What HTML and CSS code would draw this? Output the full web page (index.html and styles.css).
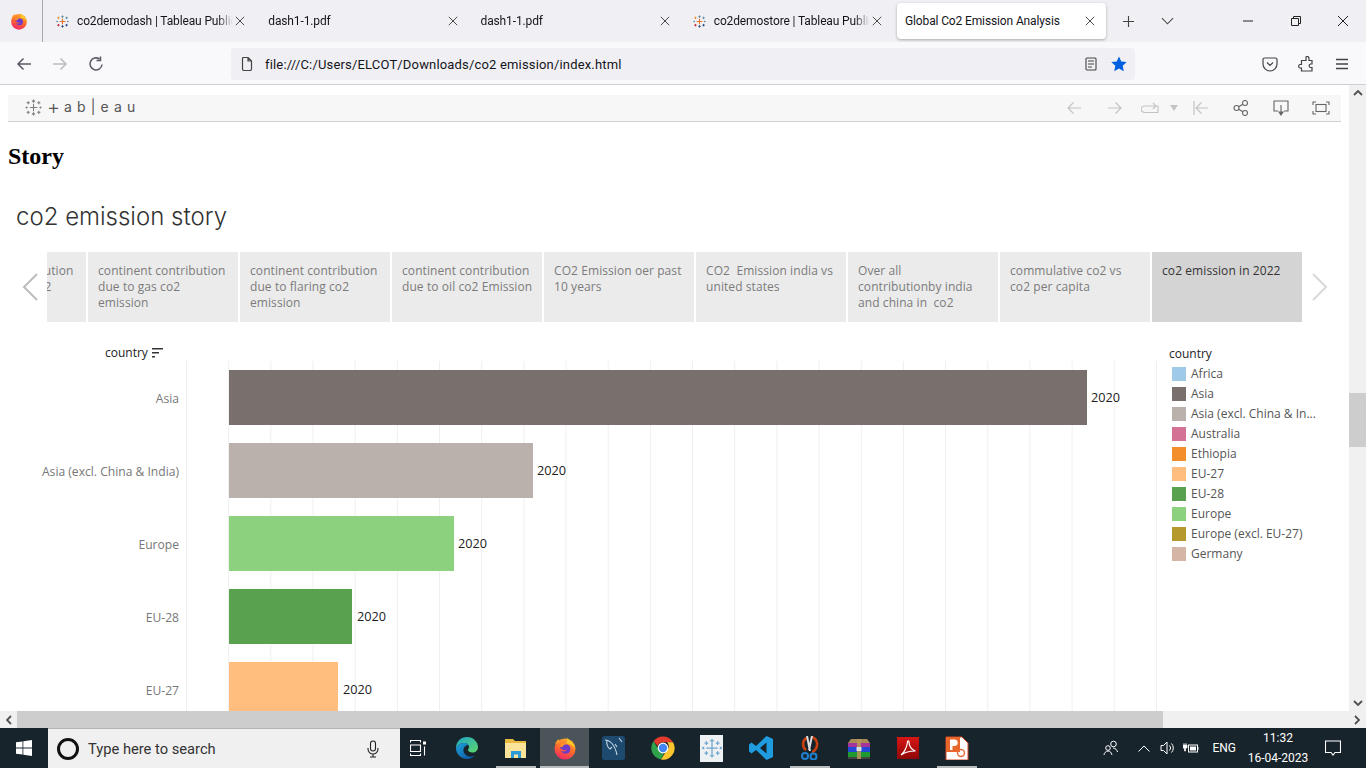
FILE: index.html
```html
<!DOCTYPE html>
<html lang="en">
<head>
<meta charset="utf-8">
<title>Global Co2 Emission Analysis</title>
<link rel="stylesheet" href="styles.css">
</head>
<body>
<svg class="defs" width="0" height="0" aria-hidden="true">
  <defs>
    <linearGradient id="ffg" x1="0.7" y1="0" x2="0.3" y2="1"><stop offset="0" stop-color="#ffb02e"/><stop offset="0.5" stop-color="#ff6a2a"/><stop offset="1" stop-color="#f0256b"/></linearGradient>
    <linearGradient id="edg" x1="0" y1="0" x2="1" y2="1"><stop offset="0" stop-color="#1fa3dc"/><stop offset="1" stop-color="#0c4f9c"/></linearGradient>
    <linearGradient id="edt" x1="0" y1="0" x2="1" y2="1"><stop offset="0" stop-color="#1fa6c8"/><stop offset="1" stop-color="#5fd56a"/></linearGradient>
    <linearGradient id="acg" x1="0" y1="0" x2="0" y2="1"><stop offset="0" stop-color="#d81616"/><stop offset="1" stop-color="#8f0606"/></linearGradient>
    <symbol id="firefox" viewBox="0 0 24 24">
      <circle cx="12" cy="13" r="10.500" fill="url(#ffg)"/>
      <path d="M13 .5c1 3 8 4.500 9.500 12.500-2-3-5-5.500-9-5.500 1.500-2 1-5-.5-7z" fill="#ffc928"/>
      <path d="M2 8c1-2 2-4 4-5 0 1.500.5 2.500 1.500 3z" fill="#ff9a2a"/>
      <path d="M7 12c1-3.500 6-5 9-2.500 2 2 2 5.500-.5 7.500-3 1.800-7 0-7.500-2.500 2 1.500 5 1 6-.5-1.500.5-4 .5-7-2z" fill="#6f3bc8"/>
      <path d="M7 10c2-3 6-3.500 8-2-3 0-5 1-6 3.500z" fill="#ff9a2a"/>
    </symbol>
    <symbol id="tabcolor" viewBox="0 0 16 16">
      <path d="M8 4.500v7M4.500 8h7" stroke="#e8762b" stroke-width="1.400"/>
      <path d="M8 .5v3M6.500 2h3" stroke="#5b879b" stroke-width="1.100"/>
      <path d="M8 12.500v3M6.500 14h3" stroke="#1f447a" stroke-width="1.100"/>
      <path d="M3 2v3M1.500 3.500h3" stroke="#eb9129" stroke-width="1.100"/>
      <path d="M13 2v3M11.500 3.500h3" stroke="#59879b" stroke-width="1.100"/>
      <path d="M3 11v3M1.500 12.500h3" stroke="#c72035" stroke-width="1.100"/>
      <path d="M13 11v3M11.500 12.500h3" stroke="#1f447a" stroke-width="1.100"/>
      <path d="M1.500 7v2M.5 8h2M14.500 7v2M13.500 8h2" stroke="#5b879b" stroke-width="1"/>
    </symbol>
    <symbol id="tabgrey" viewBox="0 0 16 16">
      <g stroke="#7d7d7d" stroke-width="1" fill="none">
        <path d="M8 4.500v7M4.500 8h7M8 .5v3M6.500 2h3M8 12.500v3M6.500 14h3M3 2v3M1.500 3.500h3M13 2v3M11.500 3.500h3M3 11v3M1.500 12.500h3M13 11v3M11.500 12.500h3M1.500 7v2M.5 8h2M14.500 7v2M13.500 8h2"/>
      </g>
    </symbol>
    <symbol id="tabtile" viewBox="0 0 16 16">
      <g stroke="#6fa6cc" stroke-width="1" fill="none">
        <path d="M8 3.500v9M3.500 8h9M8 .5v3M6.500 2h3M8 12.500v3M6.500 14h3M3.500 2.500v3M2 4h3M12.500 2.500v3M11 4h3M3.500 10.500v3M2 12h3M12.500 10.500v3M11 12h3M1 7v2M0 8h2M15 7v2M14 8h2"/>
      </g>
    </symbol>
    <symbol id="x" viewBox="0 0 12 12"><path d="M1 1l10 10M11 1L1 11" stroke="#3a3a3a" stroke-width="1.100" fill="none"/></symbol>
  </defs>
</svg>

<header class="tabstrip">
  <div class="ff-button"><svg class="ic18" viewBox="0 0 24 24"><use href="#firefox"/></svg></div>
  <div class="tabs">
    <div class="tab"><svg class="ic13 fav"><use href="#tabcolor"/></svg><span class="tab-title">co2demodash | Tableau Public</span><svg class="tab-x"><use href="#x"/></svg></div>
    <div class="tab"><span class="tab-title">dash1-1.pdf</span><svg class="tab-x"><use href="#x"/></svg></div>
    <div class="tab"><span class="tab-title">dash1-1.pdf</span><svg class="tab-x"><use href="#x"/></svg></div>
    <div class="tab"><svg class="ic13 fav"><use href="#tabcolor"/></svg><span class="tab-title">co2demostore | Tableau Public</span><svg class="tab-x"><use href="#x"/></svg></div>
    <div class="tab tab-active"><span class="tab-title">Global Co2 Emission Analysis</span><svg class="tab-x"><use href="#x"/></svg></div>
  </div>
  <svg class="strip-plus" viewBox="0 0 14 14"><path d="M7 1v12M1 7h12" stroke="#444" stroke-width="1.200"/></svg>
  <svg class="strip-chev" viewBox="0 0 14 8"><path d="M1 1l6 6 6-6" stroke="#444" stroke-width="1.100" fill="none"/></svg>
  <div class="win-ctrls">
    <svg class="win-ic" viewBox="0 0 12 12"><path d="M1 6h10" stroke="#222"/></svg>
    <svg class="win-ic" viewBox="0 0 12 12"><path d="M1.500 3.500h7v7h-7zM3.500 3.500v-2h7v7h-2" stroke="#222" fill="none"/></svg>
    <svg class="win-ic" viewBox="0 0 12 12"><path d="M1 1l10 10M11 1L1 11" stroke="#222" fill="none"/></svg>
  </div>
</header>

<nav class="navbar">
  <div class="nav-btns">
    <svg class="ic16" viewBox="0 0 16 16"><path d="M15 8H2M7.500 2.500L2 8l5.500 5.500" stroke="#5b5b66" stroke-width="1.500" fill="none"/></svg>
    <svg class="ic16" viewBox="0 0 16 16"><path d="M1 8h13M8.500 2.500L14 8l-5.500 5.500" stroke="#bcbcc0" stroke-width="1.500" fill="none"/></svg>
    <svg class="ic16" viewBox="0 0 16 16"><path d="M14 8.500A6 6 0 1 1 11.500 3M12.500 .5V4.500H8.500" stroke="#5b5b66" stroke-width="1.500" fill="none"/></svg>
  </div>
  <div class="urlbar">
    <svg class="url-doc" viewBox="0 0 12 14"><path d="M1.500 1.500a1 1 0 0 1 1-1h4.500l3.500 3.500v8a1.500 1.500 0 0 1-1.500 1.500h-6a1.500 1.500 0 0 1-1.500-1.500zM7 .5V4h3.500" stroke="#444" stroke-width="1.200" fill="none"/></svg>
    <span class="url-text">file:///C:/Users/ELCOT/Downloads/co2 emission/index.html</span>
    <svg class="url-reader" viewBox="0 0 12 14"><path d="M1 2a1 1 0 0 1 1-1h8a1 1 0 0 1 1 1v10a1 1 0 0 1-1 1H2a1 1 0 0 1-1-1zM3 4h6M3 7h6M3 10h4" stroke="#444" stroke-width="1.100" fill="none"/></svg>
    <svg class="url-star" viewBox="0 0 16 16"><path d="M8 .5l2.300 5 5.400.6-4 3.700 1.100 5.400L8 12.500l-4.800 2.700 1.100-5.400-4-3.700 5.400-.6z" fill="#0061e0"/></svg>
  </div>
  <div class="nav-right">
    <svg class="ic16" viewBox="0 0 16 16"><path d="M2.500 2h11A1.500 1.500 0 0 1 15 3.500V8a7 7 0 0 1-14 0V3.500A1.500 1.500 0 0 1 2.500 2zM5 6.500L8 9.500l3-3" stroke="#444" stroke-width="1.200" fill="none"/></svg>
    <svg class="ic16" viewBox="0 0 16 16"><path d="M8 1a1.800 1.800 0 0 1 3 1.200V4.500h3V8h-1.500a1.800 1.800 0 0 0 0 3.500H14V15H3.500v-3H2a1.800 1.800 0 0 1 0-3.500h1.500V4.500H8z" stroke="#444" stroke-width="1.200" fill="none"/></svg>
    <svg class="ic16" viewBox="0 0 16 16"><path d="M2 3.500h12M2 8h12M2 12.500h12" stroke="#444" stroke-width="1.300"/></svg>
  </div>
</nav>

<div class="browser-body">
  <main class="page">
    <div class="tb-toolbar">
      <div class="tb-logo"><svg class="tb-mark"><use href="#tabgrey"/></svg><span class="tb-plus">+</span><span class="tb-word">a b | e a u</span></div>
      <div class="tb-actions">
        <svg class="tb-ic tb-back" viewBox="0 0 16 14"><path d="M15 7H2M7.500 1.500L2 7l5.500 5.500" stroke="#c4c4c4" stroke-width="1.200" fill="none"/></svg>
        <svg class="tb-ic tb-fwd" viewBox="0 0 16 14"><path d="M1 7h13M8.500 1.500L14 7l-5.500 5.500" stroke="#c4c4c4" stroke-width="1.200" fill="none"/></svg>
        <svg class="tb-redo" viewBox="0 0 18 12"><path d="M9 4H3.500a3 3 0 0 0 0 6.500H17V4h-2M8.500 4h6M12 1l3 3-3 3" stroke="#c4c4c4" stroke-width="1.200" fill="none"/></svg>
        <svg class="tb-caret" viewBox="0 0 8 6"><path d="M0 0h8L4 6z" fill="#c4c4c4"/></svg>
        <svg class="tb-ic tb-first" viewBox="0 0 16 16"><path d="M1 1v14M15 8H3M8.500 2.500L3 8l5.500 5.500" stroke="#c4c4c4" stroke-width="1.200" fill="none"/></svg>
        <svg class="tb-ic tb-share" viewBox="0 0 16 16"><circle cx="3.500" cy="8" r="2.500" fill="none" stroke="#666" stroke-width="1.100"/><circle cx="12" cy="3" r="2.500" fill="none" stroke="#666" stroke-width="1.100"/><circle cx="12" cy="13" r="2.500" fill="none" stroke="#666" stroke-width="1.100"/><path d="M5.700 6.800L9.800 4.200M5.700 9.200l4.100 2.600" stroke="#666" stroke-width="1.100"/></svg>
        <svg class="tb-ic tb-dl" viewBox="0 0 16 16"><path d="M5 11H1V1h14v10h-4M8 5v9" stroke="#666" stroke-width="1.100" fill="none"/><path d="M5 11.500h6L8 16z" fill="#666"/></svg>
        <svg class="tb-full" viewBox="0 0 18 14"><path d="M1 4V1h3M14 1h3v3M17 10v3h-3M4 13H1v-3" stroke="#666" stroke-width="1.100" fill="none"/><rect x="4" y="3.500" width="10" height="7" fill="none" stroke="#666" stroke-width="1.100"/></svg>
      </div>
    </div>

    <h1 class="story-h">Story</h1>
    <h2 class="story-title">co2 emission story</h2>

    <div class="points">
      <svg class="pt-arrow" viewBox="0 0 16 28"><path d="M15 1L2 14l13 13" stroke="#bdbdbd" stroke-width="2" fill="none"/></svg>
      <div class="pt pt-clipped"><div class="pt-inner">continent contribution due to cement co2 emission</div></div>
      <div class="pt">continent contribution due to gas co2 emission</div>
      <div class="pt">continent contribution due to flaring co2 emission</div>
      <div class="pt">continent contribution due to oil co2 Emission</div>
      <div class="pt">CO2 Emission oer past 10 years</div>
      <div class="pt">CO2&nbsp; Emission india vs united states</div>
      <div class="pt">Over all<br>contributionby india and china in&nbsp; co2</div>
      <div class="pt">commulative co2 vs co2 per capita</div>
      <div class="pt pt-active">co2 emission in 2022</div>
      <svg class="pt-arrow pt-arrow-r" viewBox="0 0 16 28"><path d="M1 1l13 13L1 27" stroke="#d8d8d8" stroke-width="2" fill="none"/></svg>
    </div>

    <div class="viz">
      <div class="viz-main">
        <div class="col-head">country<svg class="sort-ic" viewBox="0 0 11 10"><path d="M0 0h11v1.500H0zM0 4h7v1.500H0zM0 8h3v1.500H0z" fill="#333"/></svg></div>
        <div class="viz-body">
          <div class="axis">
            <div class="axis-l">Asia</div>
            <div class="axis-l">Asia (excl. China &amp; India)</div>
            <div class="axis-l">Europe</div>
            <div class="axis-l">EU-28</div>
            <div class="axis-l">EU-27</div>
          </div>
          <div class="plot">
            <div class="row"><div class="bar c-asia" style="width:858px"></div><span class="val">2020</span></div>
            <div class="row"><div class="bar c-asiax" style="width:304px"></div><span class="val">2020</span></div>
            <div class="row"><div class="bar c-europe" style="width:225px"></div><span class="val">2020</span></div>
            <div class="row"><div class="bar c-eu28" style="width:123px"></div><span class="val val-far">2020</span></div>
            <div class="row"><div class="bar c-eu27" style="width:109px"></div><span class="val val-far">2020</span></div>
          </div>
        </div>
      </div>
      <aside class="legend">
        <div class="legend-t">country</div>
        <div class="lg"><i class="sw c-africa"></i>Africa</div>
        <div class="lg"><i class="sw c-asia"></i>Asia</div>
        <div class="lg"><i class="sw c-asiax"></i>Asia (excl. China &amp; In...</div>
        <div class="lg"><i class="sw c-aus"></i>Australia</div>
        <div class="lg"><i class="sw c-eth"></i>Ethiopia</div>
        <div class="lg"><i class="sw c-eu27"></i>EU-27</div>
        <div class="lg"><i class="sw c-eu28"></i>EU-28</div>
        <div class="lg"><i class="sw c-europe"></i>Europe</div>
        <div class="lg"><i class="sw c-europex"></i>Europe (excl. EU-27)</div>
        <div class="lg"><i class="sw c-ger"></i>Germany</div>
      </aside>
    </div>
  </main>
  <div class="vscroll">
    <svg class="sb-arrow" viewBox="0 0 10 6"><path d="M1 5l4-4 4 4" stroke="#505050" stroke-width="1.800" fill="none"/></svg>
    <div class="vthumb"></div>
    <svg class="sb-arrow" viewBox="0 0 10 6"><path d="M1 1l4 4 4-4" stroke="#505050" stroke-width="1.800" fill="none"/></svg>
  </div>
</div>

<div class="hscroll">
  <svg class="sb-arrow-h" viewBox="0 0 6 10"><path d="M5 1L1 5l4 4" stroke="#505050" stroke-width="1.800" fill="none"/></svg>
  <div class="hthumb"></div>
  <svg class="sb-arrow-h" viewBox="0 0 6 10"><path d="M1 1l4 4-4 4" stroke="#505050" stroke-width="1.800" fill="none"/></svg>
</div>

<footer class="taskbar">
  <div class="start"><svg class="ic16" viewBox="0 0 16 16"><path d="M0 2.300l6.500-.9v6.200H0zM7.300 1.300L16 0v7.600H7.300zM0 8.400h6.500v6.200L0 13.700zM7.300 8.400H16V16l-8.700-1.200z" fill="#fff"/></svg></div>
  <div class="search">
    <span class="cortana"></span>
    <span class="search-text">Type here to search</span>
    <svg class="mic" viewBox="0 0 12 18"><rect x="3.500" y="1" width="5" height="10" rx="2.500" fill="none" stroke="#222" stroke-width="1.100"/><path d="M1 8v1a5 5 0 0 0 10 0V8M6 14v3M3 17h6" stroke="#222" stroke-width="1.100" fill="none"/></svg>
  </div>
  <div class="apps">
    <div class="app"><svg class="ic16" viewBox="0 0 16 16"><path d="M0 .5h11M0 15.500h11M.5 .5v2M10.500 .5v2M.5 15.500v-2M10.500 15.500v-2M.5 5h10v6.500H.5zM14.500 6.500V15.500" stroke="#fff" stroke-width="1.100" fill="none"/><rect x="13" y="1.500" width="3" height="3" fill="#fff"/></svg></div>
    <div class="app"><svg class="ic24" viewBox="0 0 24 24"><path d="M1 12C1 5.500 6 1 12 1c6.500 0 11 5 11 10 0 3.500-2.500 5.500-5.500 5.500-2.500 0-4.500-1-4.500-2.500 0-1 1-1.500 1-3C14 8.500 11.500 7 9 7c-3.500 0-6.500 2-8 5z" fill="url(#edt)"/><path d="M1 12c0 6 5 11 11 11 3 0 5.500-1 7.500-3-5 1.500-10.500-.5-11-5-.3-3.500 2-6 5-6-1-1.500-2.500-2-4.500-2-3.500 0-6.500 2-8 5z" fill="url(#edg)"/></svg></div>
    <div class="app app-run"><svg class="ic24" viewBox="0 0 24 24"><path d="M1 3h8l2 2h11v17H1z" fill="#e8b93f"/><path d="M1 7h21v15H1z" fill="#fbe39a"/><path d="M7 22v-7h10v7h-3v-3.500h-4V22z" fill="#2a9bd8"/></svg></div>
    <div class="app app-on"><svg class="ic24"><use href="#firefox"/></svg></div>
    <div class="app"><svg class="ic24" viewBox="0 0 24 24"><rect x="0" y="0" width="23" height="24" rx="2.500" fill="#1d4a6e"/><path d="M3 4c5 0 10 5 12 15M5 4c-1 4 1 8 3 9l2-2M13 8l2 3M17 2l3 4" stroke="#c3d6e2" stroke-width="1.100" fill="none"/></svg></div>
    <div class="app"><svg class="ic24" viewBox="0 0 24 24"><path d="M12 .5a11.500 11.500 0 0 1 10 5.800H12A5.700 5.700 0 0 0 6.700 10L2.500 5.300A11.500 11.500 0 0 1 12 .5z" fill="#e33b2e"/><path d="M2.500 5.300L7 12.500a5.700 5.700 0 0 0 6 5.100L10 23.400A11.500 11.500 0 0 1 2.500 5.300z" fill="#2fa14a"/><path d="M22 6.300A11.500 11.500 0 0 1 10 23.400l5-8a5.700 5.700 0 0 0 1-9.100z" fill="#fbc52d"/><circle cx="12" cy="12" r="4.800" fill="#4285f4" stroke="#fff" stroke-width="1.200"/></svg></div>
    <div class="app"><span class="tile"><svg class="ic20"><use href="#tabtile"/></svg></span></div>
    <div class="app"><svg class="ic24" viewBox="0 0 24 24"><path d="M17.500 0L24 3v18l-6.500 3L7 14l-4.500 3.500L0 15.500V8.500L2.500 6.500 7 10zM17.500 6.500L11 12l6.500 5.500z" fill="#1f9be0" fill-rule="evenodd"/></svg></div>
    <div class="app app-run"><svg class="ic24" viewBox="0 0 24 24"><path d="M9 2C4 4 4 11 8 14M13 1c6 1 8 8 4 13-1 1-2 2-3 2" stroke="#c8400f" stroke-width="2.600" fill="none"/><path d="M14 0l-3 14M9 0l3 15" stroke="#ddd" stroke-width="2"/><circle cx="7" cy="20" r="3" fill="none" stroke="#1f80d0" stroke-width="2"/><circle cx="15.500" cy="20.500" r="3" fill="none" stroke="#1f80d0" stroke-width="2"/></svg></div>
    <div class="app"><svg class="ic24" viewBox="0 0 24 24"><path d="M1 7h22v4H1z" fill="#a5359c"/><path d="M1 11h22v5H1z" fill="#2249d8"/><path d="M1 16h22v5H1z" fill="#1e9a2e"/><path d="M1 21h22v2H1z" fill="#444"/><path d="M4 3h16l3 4H1z" fill="#a98b55"/><path d="M10 3h4v20h-4z" fill="#b9975b" opacity=".85"/><rect x="9.500" y="11" width="5" height="4" fill="#ddd"/></svg></div>
    <div class="app"><svg class="ic24" viewBox="0 0 24 24"><rect x="1" y="1" width="22" height="22" fill="url(#acg)"/><path d="M5 19c3-2 6-8 6.500-13 0-1.500 1.500-1.500 1.500 0 0 4 2.500 8 6.500 9-4 0-9 0-14.500 4z" fill="none" stroke="#fff" stroke-width="1.200"/></svg></div>
    <div class="app app-run app-ppt"><svg class="ic24" viewBox="0 0 24 24"><path d="M1 1h16l6 6v17H1z" fill="#fff" stroke="#d24726"/><path d="M1 1h14v15H1z" fill="#e8662a"/><path d="M5 14V3.500h5a3.300 3.300 0 0 1 0 6.500H7.500v4z" fill="#fff"/><circle cx="16" cy="17" r="3.500" fill="none" stroke="#e86a3a" stroke-width="1.400"/></svg></div>
  </div>
  <div class="tray">
    <svg class="tray-people" viewBox="0 0 16 16"><circle cx="10.500" cy="4" r="2.800" fill="none" stroke="#fff"/><circle cx="5" cy="8" r="2.300" fill="none" stroke="#fff"/><path d="M1 15c0-2 2-4 4-4s3 1 4 4M10 8c2.500 0 4 2 4.500 4" fill="none" stroke="#fff"/></svg>
    <svg class="tray-chev" viewBox="0 0 12 7"><path d="M.5 6.500L6 1l5.500 5.500" stroke="#fff" fill="none"/></svg>
    <svg class="tray-ic" viewBox="0 0 16 16"><path d="M1 5.500h2.500L7 2v12l-3.500-3.500H1zM9.500 5.500a3.500 3.500 0 0 1 0 5M11.500 3.500a6.500 6.500 0 0 1 0 9" fill="none" stroke="#fff"/></svg>
    <svg class="tray-ic" viewBox="0 0 16 16"><rect x="5.500" y="5" width="9" height="7" fill="none" stroke="#fff"/><rect x="7" y="6.500" width="6" height="4" fill="#fff"/><path d="M15 7v3" stroke="#fff"/><path d="M0 5h4v3H2.500v3H1.500V8H0zM1 3v2M3 3v2" fill="#fff" stroke="#fff" stroke-width=".7"/></svg>
    <span class="tray-lang">ENG</span>
    <div class="clock"><span>11:32</span><span>16-04-2023</span></div>
    <svg class="tray-note" viewBox="0 0 16 16"><path d="M.5 1h15v11.500H10L8 15l-2-2.500H.5z" fill="none" stroke="#fff" stroke-width="1.100"/></svg>
  </div>
</footer>
</body>
</html>
```

FILE: styles.css
```css
* { box-sizing: border-box; }
html, body { margin: 0; height: 100%; }
body {
  width: 1366px; height: 768px; overflow: hidden;
  display: flex; flex-direction: column;
  font-family: "Open Sans", "Liberation Sans", sans-serif;
  background: #fff;
}
.defs { position: absolute; }
svg { display: block; flex: none; }
.ic16 { width: 16px; height: 16px; }
.ic18 { width: 18px; height: 18px; }
.ic20 { width: 20px; height: 20px; }
.ic13 { width: 13px; height: 13px; }
.ic24 { width: 24px; height: 24px; }

/* tab strip */
.tabstrip { height: 42px; background: #f0f0f4; display: flex; align-items: center; font-family: Roboto, "Liberation Sans", sans-serif; }
.ff-button { width: 43px; height: 42px; border-right: 1px solid #a9a9ad; display: flex; align-items: center; justify-content: center; padding-right: 4px; }
.tabs { display: flex; margin-left: 5px; }
.tab { width: 212.250px; height: 36px; padding: 0 15px 0 8px; display: flex; align-items: center; font-size: 12px; letter-spacing: -.13px; color: #15141a; }
.tab-active { width: 209px; padding-right: 11px; background: #fff; border-radius: 4px; box-shadow: 0 1px 3px rgba(0,0,0,.3); }
.fav { margin-right: 8px; }
.tab-title { flex: 1; white-space: nowrap; overflow: hidden; -webkit-mask-image: linear-gradient(90deg, #000 90%, transparent); mask-image: linear-gradient(90deg, #000 90%, transparent); }
.tab-active .tab-title { -webkit-mask-image: none; mask-image: none; }
.tab-x { width: 10px; height: 10px; margin-left: 2px; }
.strip-plus { width: 13px; height: 13px; margin-left: 16px; }
.strip-chev { width: 13px; height: 8px; margin-left: 26px; }
.win-ctrls { margin-left: auto; display: flex; align-items: center; gap: 35.500px; padding-right: 17px; }
.win-ic { width: 12px; height: 12px; }

/* nav */
.navbar { height: 43px; padding-top: 2px; background: #f9f9fb; border-bottom: 1px solid #cfcfd8; display: flex; align-items: center; }
.nav-btns { display: flex; gap: 20px; padding-left: 16px; width: 231px; }
.urlbar { width: 904px; height: 32px; background: #f0f0f4; border-radius: 4px; display: flex; align-items: center; padding: 0 8px 0 10px; font-size: 13px; color: #15141a; font-family: Roboto, "Liberation Sans", sans-serif; }
.url-doc { width: 12px; height: 14px; margin-right: 12px; }
.url-text { flex: 1; letter-spacing: .17px; }
.url-reader { width: 12px; height: 14px; margin-right: 14px; }
.url-star { width: 16px; height: 16px; }
.nav-right { display: flex; gap: 20px; margin-left: auto; padding-right: 16px; }

/* page */
.browser-body { flex: 1; min-height: 0; display: flex; }
.page { width: 1349px; overflow: hidden; padding-top: 10px; display: flex; flex-direction: column; }
.tb-toolbar { height: 27px; margin: 0 8px; background: #f7f7f7; border-bottom: 1px solid #cfcfcf; display: flex; align-items: center; }
.tb-logo { display: flex; align-items: center; padding-left: 17px; padding-bottom: 2px; }
.tb-mark { width: 17px; height: 17px; margin-right: 5px; }
.tb-plus { font: 300 20px/20px Inter, sans-serif; color: #555; margin-right: 4px; }
.tb-word { font: 400 14px/16px Inter, sans-serif; color: #555; word-spacing: 1.200px; white-space: pre; }
.tb-actions { margin-left: auto; display: flex; align-items: center; padding-right: 11px; }
.tb-ic { width: 16px; height: 14px; margin-right: 24px; }
.tb-back { margin-right: 25px; }
.tb-fwd { margin-right: 21px; }
.tb-redo { width: 18px; height: 12px; margin-left: -3px; margin-right: 11px; }
.tb-caret { width: 8px; height: 6px; margin-right: 15px; }
.tb-first, .tb-share, .tb-dl { height: 16px; }
.tb-full { width: 18px; height: 14px; margin-left: -1px; }
.story-h { margin: 21px 0 0 8px; font: bold 24px/27px "Liberation Serif", serif; color: #000; }
.story-title { margin: 31px 0 0 16px; font-family: Inter, sans-serif; font-weight: 300; font-size: 24px; line-height: 32px; color: #333; }

.points { display: flex; height: 70px; margin-top: 19px; gap: 2px; align-items: stretch; position: relative; }
.pt-arrow { width: 16px; height: 28px; align-self: center; margin: 0 7px 0 22px; }
.pt-arrow-r { margin: 0 0 0 8px; }
.pt { width: 150px; background: #ebebeb; padding: 11px 9px 0 10px; font-size: 12px; letter-spacing: .08px; line-height: 16px; color: #7b7b7b; }
.pt-active { background: #d4d4d4; color: #333; }
.pt-clipped { width: 39px; padding: 0; overflow: hidden; display: flex; justify-content: flex-end; }
.pt-inner { flex: none; width: 150px; padding: 11px 10px 0; }

.viz { flex: 1; min-height: 0; display: flex; margin-top: 24px; overflow: hidden; }
.viz-main { width: 1158px; display: flex; flex-direction: column; }
.col-head { height: 15px; padding-left: 105px; padding-bottom: 1px; font-size: 12px; font-weight: 500; line-height: 14px; color: #222; display: flex; align-items: center; gap: 4px; }
.sort-ic { width: 11px; height: 10px; }
.viz-body { flex: 1; min-height: 0; display: flex; }
.axis { width: 186px; padding: 9px 7px 0 0; font-size: 12.100px; color: #777; text-align: right; }
.axis-l { height: 73px; padding-top: 20px; line-height: 18px; white-space: nowrap; }
.plot { width: 972px; padding-top: 9px; display: flex; flex-direction: column; gap: 18px;
  background-image: linear-gradient(90deg, #efefef 1px, transparent 1px);
  background-size: 42.180px 100%; background-position: 0 0; }
.row { height: 55px; display: flex; align-items: center; padding-left: 43px; flex: none; }
.bar { height: 55px; }
.val { margin-left: 4px; font-size: 12.700px; color: #222; margin-top: -1px; }
.val-far { margin-left: 5px; }

.legend { margin-left: 11px; font-size: 12px; color: #555; }
.legend-t { height: 15px; font-size: 12px; font-weight: 500; line-height: 16px; color: #222; margin-bottom: 2px; }
.lg { height: 20px; display: flex; align-items: center; padding-left: 3px; white-space: nowrap; }
.sw { width: 14px; height: 14px; margin-right: 5px; flex: none; transform: translateY(1px); }
.c-africa { background: #a0cbe8; }
.c-asia { background: #796f6c; }
.c-asiax { background: #bab0ac; }
.c-aus { background: #d37295; }
.c-eth { background: #f28e2b; }
.c-eu27 { background: #ffbe7d; }
.c-eu28 { background: #59a14f; }
.c-europe { background: #8cd17d; }
.c-europex { background: #b6992d; }
.c-ger { background: #d4b5a6; }

/* scrollbars */
.vscroll { width: 17px; background: #f0f0f0; display: flex; flex-direction: column; align-items: center; position: relative; }
.sb-arrow { width: 10px; height: 6px; margin: 5px 0; }
.sb-arrow:last-child { margin-top: auto; }
.vthumb { position: absolute; top: 308px; left: 0; width: 17px; height: 54px; background: #cdcdcd; }
.hscroll { height: 17px; background: #f0f0f0; display: flex; align-items: center; }
.sb-arrow-h { width: 6px; height: 10px; margin: 0 6px; }
.hthumb { width: 1150px; height: 17px; margin-left: -1px; margin-right: 169px; background: #cdcdcd; }
.hscroll .sb-arrow-h:last-child { margin-left: 22px; }

/* taskbar */
.taskbar { height: 40px; background: #18242b; display: flex; align-items: stretch; font-family: Roboto, "Liberation Sans", sans-serif; color: #fff; }
.start { width: 48px; display: flex; align-items: center; justify-content: center; }
.search { width: 352px; background: #f0f0f0; display: flex; align-items: center; padding: 0 21px 0 9px; color: #333; font-size: 14.700px; border-top: 1px solid #b5b5b5; }
.cortana { width: 22px; height: 22px; border-radius: 50%; border: 3px solid #111; margin-right: 9px; flex: none; }
.search-text { flex: 1; }
.mic { width: 12px; height: 18px; }
.apps { display: flex; margin-left: -7px; }
.app { width: 49px; display: flex; align-items: center; justify-content: center; }
.app-run { background: linear-gradient(#b8bcbd, #b8bcbd) center bottom / 40px 2px no-repeat; }
.app-on { background: #4b5458; box-shadow: inset 0 -2px 0 #b8bcbd; }
.tile { width: 23px; height: 27px; background: #eef1f4; display: flex; align-items: center; justify-content: center; }
.tray { margin-left: auto; display: flex; align-items: center; }
.tray-people { width: 16px; height: 16px; margin-right: 19px; }
.tray-chev { width: 12px; height: 7px; margin-right: 10px; }
.tray-ic { width: 16px; height: 16px; margin-right: 7px; }
.tray-lang { font-size: 12px; margin: 0 10px 0 6px; }
.clock { width: 64px; display: flex; flex-direction: column; align-items: center; font-size: 12px; line-height: 20px; }
.tray-note { width: 16px; height: 16px; margin: 0 25px 0 15px; }
```
